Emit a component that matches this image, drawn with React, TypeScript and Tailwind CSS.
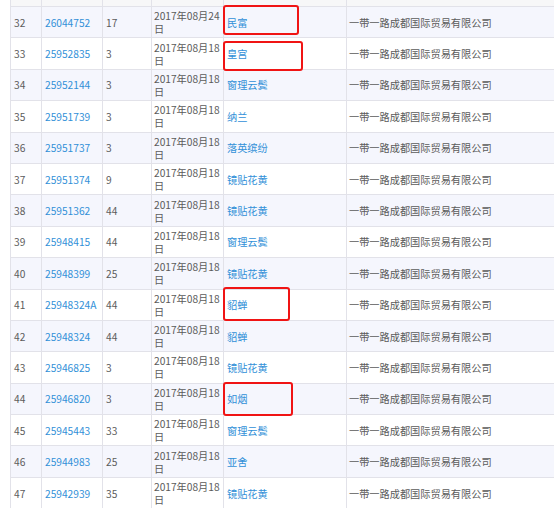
const rows = [
    { no: 32, reg: '26044752', cls: '17', date: '2017年08月24日', name: '民富', box: { top: '-top-[2px]', w: 'w-[76px]', h: 'h-[30px]' } },
    { no: 33, reg: '25952835', cls: '3', date: '2017年08月18日', name: '皇宫', box: { top: 'top-[3px]', w: 'w-[80px]', h: 'h-[30px]' } },
    { no: 34, reg: '25952144', cls: '3', date: '2017年08月18日', name: '窗理云鬓' },
    { no: 35, reg: '25951739', cls: '3', date: '2017年08月18日', name: '纳兰' },
    { no: 36, reg: '25951737', cls: '3', date: '2017年08月18日', name: '落英缤纷' },
    { no: 37, reg: '25951374', cls: '9', date: '2017年08月18日', name: '镜贴花黄' },
    { no: 38, reg: '25951362', cls: '44', date: '2017年08月18日', name: '镜贴花黄' },
    { no: 39, reg: '25948415', cls: '44', date: '2017年08月18日', name: '窗理云鬓' },
    { no: 40, reg: '25948399', cls: '25', date: '2017年08月18日', name: '镜贴花黄' },
    { no: 41, reg: '25948324A', cls: '44', date: '2017年08月18日', name: '貂蝉', box: { top: '-top-[3px]', w: 'w-[67px]', h: 'h-[34px]' } },
    { no: 42, reg: '25948324', cls: '44', date: '2017年08月18日', name: '貂蝉' },
    { no: 43, reg: '25946825', cls: '3', date: '2017年08月18日', name: '镜贴花黄' },
    { no: 44, reg: '25946820', cls: '3', date: '2017年08月18日', name: '如烟', box: { top: '-top-[2px]', w: 'w-[70px]', h: 'h-[34px]' } },
    { no: 45, reg: '25945443', cls: '33', date: '2017年08月18日', name: '窗理云鬓' },
    { no: 46, reg: '25944983', cls: '25', date: '2017年08月18日', name: '亚舍' },
    { no: 47, reg: '25942939', cls: '35', date: '2017年08月18日', name: '镜贴花黄' },
]

const gridCols = 'grid grid-cols-[31px_61px_49px_72px_123px_1fr]'
const cell = 'border-l border-[#e2e2e9] flex items-center'

const App = () => {
    return (
        <div
            className="w-[554px] h-[509px] overflow-hidden bg-white pl-[10px] text-[10.2px] leading-[13px] text-[#5b5b5b]"
            style={{ fontFamily: '"Noto Sans CJK SC", "Noto Sans", sans-serif' }}
        >
            {/* tail of the previous row */}
            <div className={`${gridCols} h-[6px] bg-[#f7f7f8]`}>
                <div className={cell}></div>
                <div className={cell}></div>
                <div className={cell}></div>
                <div className={cell}></div>
                <div className={cell}></div>
                <div className={cell}></div>
            </div>

            {rows.map((row) => (
                <div
                    key={row.no}
                    className={`${gridCols} h-[31.4px] border-t border-[#e2e2e9] ${row.no % 2 === 0 ? 'bg-[#f5f6fd]' : 'bg-white'}`}
                >
                    <div className={`${cell} pl-[3px]`}>{row.no}</div>
                    <div className={`${cell} pl-[3px] text-[#3190d8] whitespace-nowrap`}>{row.reg}</div>
                    <div className={`${cell} pl-[3px]`}>{row.cls}</div>
                    <div className={`${cell} pl-[2px] pr-[1px] break-all`}>{row.date}</div>
                    <div className={`${cell} relative pl-[3px] text-[#3190d8]`}>
                        {row.name}
                        {row.box && (
                            <div
                                className={`absolute -left-[1px] ${row.box.top} ${row.box.w} ${row.box.h} border-2 border-[#f01414] rounded-[3px]`}
                            ></div>
                        )}
                    </div>
                    <div className={`${cell} pl-[2px] whitespace-nowrap`}>一带一路成都国际贸易有限公司</div>
                </div>
            ))}
        </div>
    )
}

export default App
